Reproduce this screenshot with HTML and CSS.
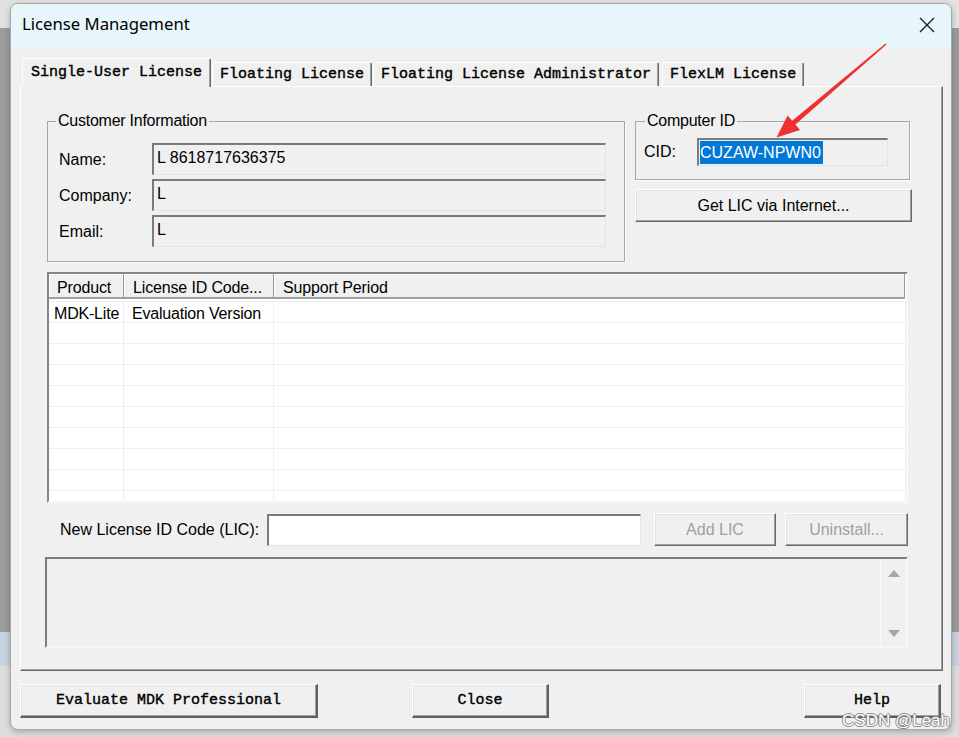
FILE: index.html
```html
<!DOCTYPE html>
<html lang="en">
<head>
  <meta charset="UTF-8" />
  <title>License Management</title>
  <link rel="stylesheet" href="styles.css">
</head>
<body>
  <div class="window">
    <div class="titlebar">
      <span class="title">License Management</span>
      <svg class="close" width="16" height="16" viewBox="0 0 16 16">
        <path d="M1 1 L15 15 M15 1 L1 15" stroke="#1b1b1b" stroke-width="1.3" fill="none" />
      </svg>
    </div>

    <div class="client">
      <div class="tabs">
        <div class="tab active">Single-User License</div>
        <div class="tab">Floating License</div>
        <div class="tab">Floating License Administrator</div>
        <div class="tab">FlexLM License</div>
      </div>

      <div class="panel">
        <div class="top">
          <fieldset class="group customer">
            <legend>Customer Information</legend>
            <div class="form">
              <label>Name:</label>
              <div class="field">L 8618717636375</div>
              <label>Company:</label>
              <div class="field">L</div>
              <label>Email:</label>
              <div class="field">L</div>
            </div>
          </fieldset>

          <div class="side">
            <fieldset class="group cid">
              <legend>Computer ID</legend>
              <div class="cid-row">
                <label>CID:</label>
                <div class="field"><span class="sel">CUZAW-NPWN0</span></div>
              </div>
            </fieldset>
            <button class="btn wide">Get LIC via Internet...</button>
          </div>
        </div>

        <div class="list">
          <div class="list-head">
            <span>Product</span>
            <span>License ID Code...</span>
            <span>Support Period</span>
          </div>
          <div class="rows">
            <div class="row"><span>MDK-Lite</span><span>Evaluation Version</span><span></span></div>
            <div class="row"><span></span><span></span><span></span></div>
            <div class="row"><span></span><span></span><span></span></div>
            <div class="row"><span></span><span></span><span></span></div>
            <div class="row"><span></span><span></span><span></span></div>
            <div class="row"><span></span><span></span><span></span></div>
            <div class="row"><span></span><span></span><span></span></div>
            <div class="row"><span></span><span></span><span></span></div>
            <div class="row"><span></span><span></span><span></span></div>
            <div class="row"><span></span><span></span><span></span></div>
          </div>
        </div>

        <div class="lic">
          <label>New License ID Code (LIC):</label>
          <div class="lic-input"></div>
          <button class="btn disabled add">Add LIC</button>
          <button class="btn disabled uninstall">Uninstall...</button>
        </div>

        <div class="msg">
          <div class="scroll">
            <span class="arrow-up"></span>
            <span class="arrow-down"></span>
          </div>
        </div>
      </div>

      <div class="actions">
        <button class="btn mono eval">Evaluate MDK Professional</button>
        <button class="btn mono close-btn">Close</button>
        <button class="btn mono help">Help</button>
      </div>
    </div>
  </div>

  <!-- red annotation arrow -->
  <svg class="pointer" width="959" height="737" viewBox="0 0 959 737">
    <polygon points="885.5,43.4 792.2,120.8 787.6,115.4 776.5,137.5 800,130 795.4,124.6 886.5,44.6" fill="#ee3030" />
  </svg>

  <div class="watermark">CSDN @Leah</div>
</body>
</html>
```

FILE: styles.css
```css
body {
  margin: 0;
  height: 737px;
  overflow: hidden;
  position: relative;
  font-family: "Liberation Sans", Arial, sans-serif;
  font-size: 16px;
  color: #000;
  background: linear-gradient(to bottom, #e2e2e2 0, #e2e2e2 28px, #9d9d9d 28px, #9d9d9d 632px, #c7d3e0 632px, #c7d3e0 666px, #dedede 666px);
}
.window {
  margin: 3px 0 0 10px;
  width: 942px;
  height: 727px;
  box-sizing: border-box;
  border: 1px solid #a8a8a8;
  border-radius: 8px;
  background: #f0f0f0;
  overflow: hidden;
  box-shadow: 0 2px 6px rgba(0, 0, 0, 0.25);
}
.titlebar {
  height: 44px;
  background: #e6f6fa;
  display: flex;
  justify-content: space-between;
  align-items: flex-start;
  padding: 10px 16px 0 11px;
  box-sizing: border-box;
}
.title {
  font-family: "Noto Sans", sans-serif;
  font-size: 16.7px;
  line-height: 20px;
}
.close {
  margin-top: 3px;
}
.client {
  padding: 10px 8px 0 9px;
}

/* tabs */
.tabs {
  display: flex;
  align-items: flex-end;
  height: 28px;
  padding-left: 2px;
  gap: 1px;
}
.tab {
  height: 24px;
  box-sizing: border-box;
  padding: 0 7px;
  font-family: "Liberation Mono", monospace;
  font-size: 15px;
  -webkit-text-stroke: 0.4px #000;
  line-height: 24px;
  border-top: 1px solid #fff;
  border-left: 1px solid #fff;
  border-right: 1px solid #696969;
  box-shadow: inset -1px 0 #a0a0a0;
  border-radius: 2px 2px 0 0;
  white-space: nowrap;
}
.tab:last-child {
  margin-left: 2px;
}
.tab.active {
  height: 29px;
  margin-bottom: -1px;
  padding: 0 8px 0 8px;
  line-height: 27px;
  position: relative;
  z-index: 1;
  background: #f0f0f0;
}

.panel {
  height: 585px;
  box-sizing: border-box;
  border: 1px solid;
  border-color: #fff #696969 #696969 #fff;
  box-shadow: inset -1px -1px #a0a0a0;
  padding: 25px 0 0 26px;
}
.top {
  display: grid;
  grid-template-columns: 578px 277px;
  column-gap: 10px;
  align-items: start;
}
.group {
  margin: 0;
  min-width: 0;
  border: 1px solid #a6a6a6;
  box-shadow: 1px 1px 0 #fff;
}
.group legend {
  font-size: 16px;
  line-height: 18px;
  letter-spacing: -0.25px;
  padding: 0 2px;
}
.customer {
  padding: 13px 18px 14px 11px;
}
.customer legend {
  margin-left: -3px;
}
label {
  white-space: nowrap;
}
.form {
  display: grid;
  grid-template-columns: 93px 1fr;
  row-gap: 4px;
  align-items: center;
}
.form label {
  padding-top: 2px;
}
.field {
  height: 32px;
  box-sizing: border-box;
  border-top: 2px solid #7b7b7b;
  border-left: 2px solid #7b7b7b;
  border-right: 1px solid #e3e3e3;
  border-bottom: 1px solid #e3e3e3;
  padding: 4px 3px 0;
  line-height: 18px;
  background: #f0f0f0;
  white-space: nowrap;
}
.cid {
  width: 275px;
  box-sizing: border-box;
  padding: 8px 21px 13px 8px;
}
.cid legend {
  margin-left: 1px;
}
.cid-row {
  display: grid;
  grid-template-columns: 53px 1fr;
  align-items: center;
}
.cid .field {
  height: 28px;
  padding: 1px 1px;
}
.sel {
  display: inline-block;
  background: #0078d7;
  color: #fff;
  line-height: 22px;
  padding: 1px 2px 0 0;
}

/* buttons */
.btn {
  display: block;
  font-family: "Liberation Sans", Arial, sans-serif;
  font-size: 16px;
  color: #000;
  background: #f0f0f0;
  border: 1px solid;
  border-color: #fff #696969 #696969 #fff;
  box-shadow: inset -1px -1px #a0a0a0, inset 1px 1px #e3e3e3;
  padding: 0;
}
.btn.disabled {
  color: #a0a0a0;
}
.wide {
  margin-top: 9px;
  width: 277px;
  height: 33px;
  padding-top: 1px;
}

/* list view */
.list {
  margin-top: 10px;
  width: 861px;
  height: 231px;
  box-sizing: border-box;
  border: 2px solid;
  border-color: #858585 #f7f7f7 #f7f7f7 #858585;
  background: #fff;
  overflow: hidden;
}
.list-head,
.row {
  display: grid;
  grid-template-columns: 75px 150px 1fr;
}
.list-head span {
  height: 25px;
  box-sizing: border-box;
  background: #f0f0f0;
  border-right: 1px solid #999;
  border-bottom: 2px solid #a0a0a0;
  box-shadow: inset 1px 1px #fff;
  padding: 2px 0 0 9px;
  line-height: 23px;
  letter-spacing: -0.15px;
  white-space: nowrap;
}
.list-head span:first-child {
  padding-left: 8px;
}
.list-head span:last-child {
  margin-right: 1px;
}
.rows {
  margin-top: 2px;
  border-top: 1px solid #efefef;
}
.row {
  height: 21px;
  box-sizing: border-box;
  border-bottom: 1px solid #efefef;
}
.row span {
  border-right: 1px solid #efefef;
  padding: 2px 0 0 8px;
  line-height: 20px;
  letter-spacing: -0.2px;
  white-space: nowrap;
}
.row span:first-child {
  padding-left: 5px;
}

/* new LIC row */
.lic {
  display: flex;
  align-items: center;
  margin-top: 10px;
  width: 861px;
  padding-left: 13px;
  box-sizing: border-box;
}
.lic-input {
  flex: 1;
  height: 32px;
  margin-left: 8px;
  box-sizing: border-box;
  background: #fff;
  border-top: 2px solid #7b7b7b;
  border-left: 2px solid #7b7b7b;
  border-right: 1px solid #e3e3e3;
  border-bottom: 1px solid #e3e3e3;
}
.add {
  margin-left: 13px;
  width: 122px;
  height: 33px;
}
.uninstall {
  margin-left: 9px;
  width: 123px;
  height: 33px;
}

.msg {
  margin-top: 11px;
  margin-left: -2px;
  width: 863px;
  height: 91px;
  box-sizing: border-box;
  border: 2px solid;
  border-color: #7b7b7b #f7f7f7 #f7f7f7 #7b7b7b;
  display: flex;
  justify-content: flex-end;
}
.scroll {
  width: 25px;
  border-left: 1px solid #f9f9f9;
  display: flex;
  flex-direction: column;
  justify-content: space-between;
  align-items: center;
  padding: 11px 0 9px;
}
.arrow-up {
  border-left: 6px solid transparent;
  border-right: 6px solid transparent;
  border-bottom: 7px solid #a6a6a6;
}
.arrow-down {
  border-left: 6px solid transparent;
  border-right: 6px solid transparent;
  border-top: 7px solid #a6a6a6;
}

/* bottom buttons */
.actions {
  display: grid;
  grid-template-columns: 1fr 1fr 1fr;
  margin-top: 13px;
  width: 921px;
}
.btn.mono {
  height: 34px;
  font-family: "Liberation Mono", monospace;
  font-size: 15px;
  -webkit-text-stroke: 0.4px #000;
  padding-top: 0;
  border-width: 1px 2px 2px 1px;
  border-color: #fff #5f5f5f #5f5f5f #fff;
}
.eval {
  width: 298px;
  justify-self: start;
}
.close-btn {
  width: 137px;
  justify-self: center;
}
.help {
  width: 137px;
  justify-self: end;
}

.pointer {
  position: absolute;
  left: 0;
  top: 0;
  pointer-events: none;
}
.watermark {
  position: absolute;
  right: 9px;
  bottom: 7px;
  font-size: 17px;
  line-height: 18px;
  color: #fff;
  text-shadow: 1px 0 #8a8a8a, -1px 0 #8a8a8a, 0 1px #8a8a8a, 0 -1px #8a8a8a;
}
```
